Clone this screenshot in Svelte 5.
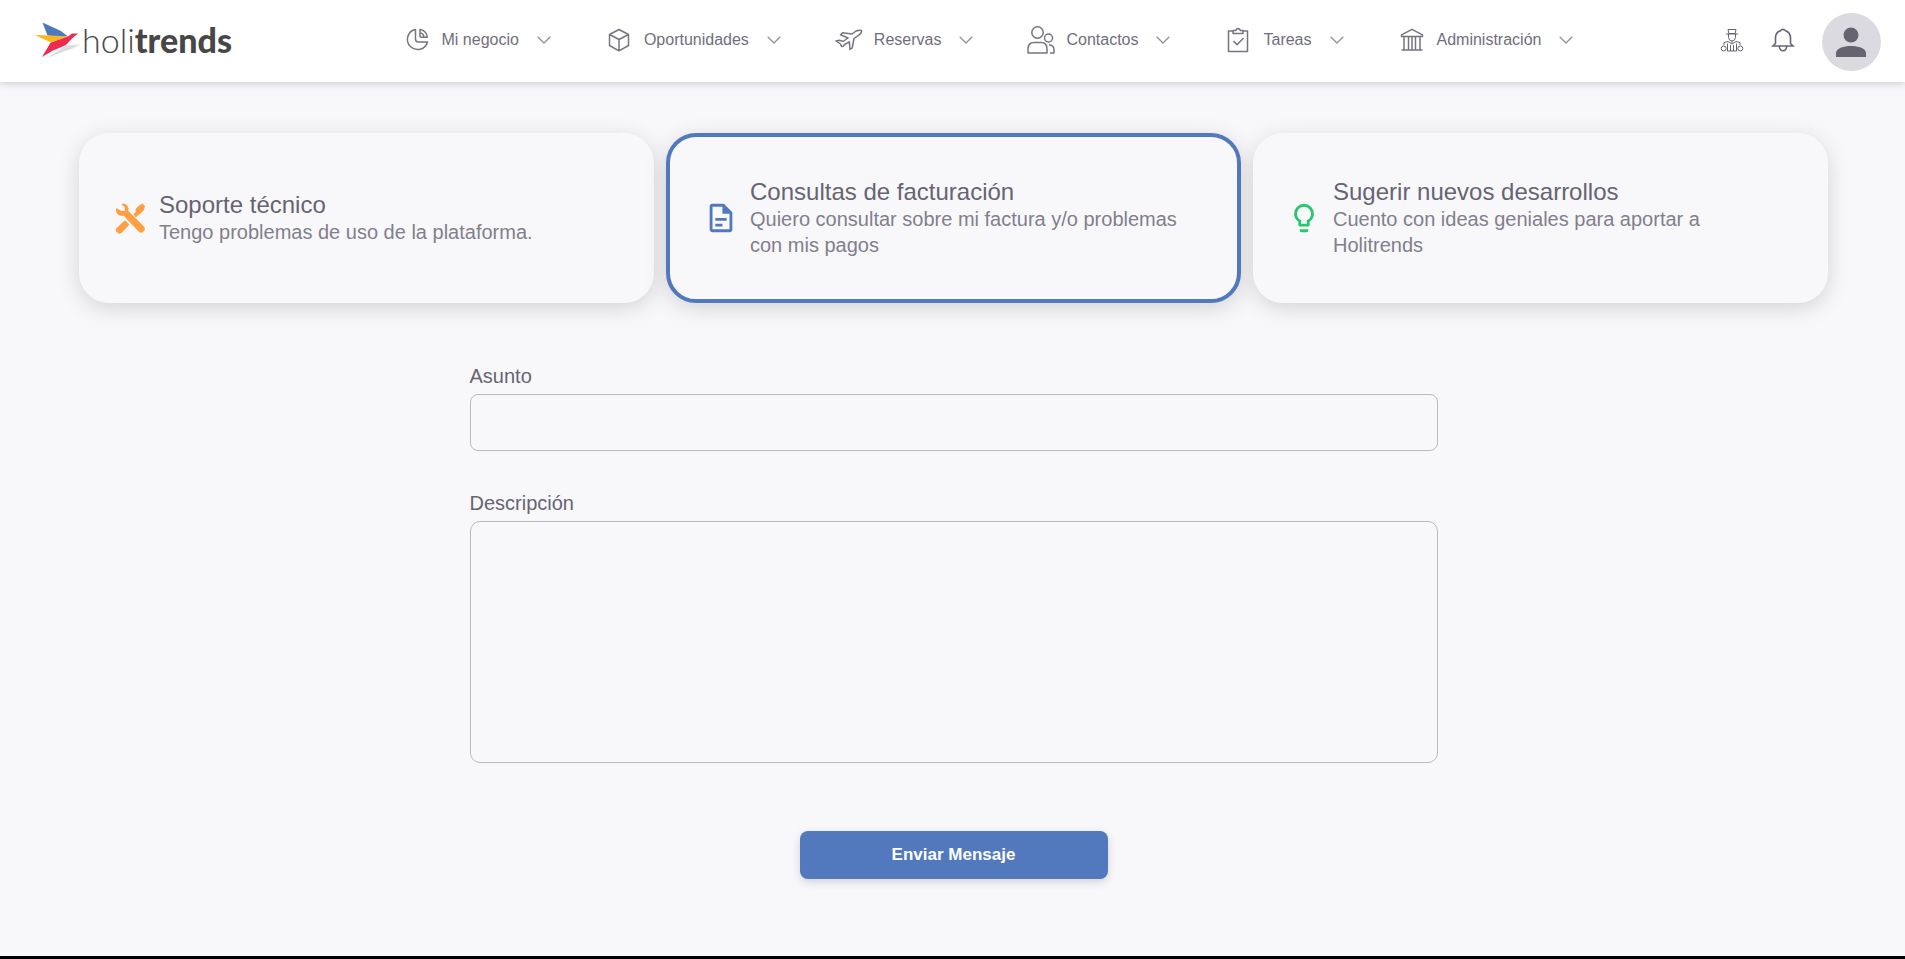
<script>
	const menu = [
		{ id: 'negocio', label: 'Mi negocio' },
		{ id: 'oportunidades', label: 'Oportunidades' },
		{ id: 'reservas', label: 'Reservas' },
		{ id: 'contactos', label: 'Contactos' },
		{ id: 'tareas', label: 'Tareas' },
		{ id: 'administracion', label: 'Administración' }
	];

	const motivos = [
		{
			id: 'soporte',
			titulo: 'Soporte técnico',
			detalle: 'Tengo problemas de uso de la plataforma.'
		},
		{
			id: 'facturacion',
			titulo: 'Consultas de facturación',
			detalle: 'Quiero consultar sobre mi factura y/o problemas con mis pagos'
		},
		{
			id: 'desarrollos',
			titulo: 'Sugerir nuevos desarrollos',
			detalle: 'Cuento con ideas geniales para aportar a Holitrends'
		}
	];

	let motivo = $state('facturacion');
	let asunto = $state('');
	let descripcion = $state('');

	function enviar(event) {
		event.preventDefault();
		asunto = '';
		descripcion = '';
	}
</script>

<div class="page">
	<header class="topbar">
		<a class="logo" href="#inicio">
			<svg class="bird" viewBox="0 0 46 38" aria-hidden="true">
				<path d="M12 37.5 L32 24.5 L46 23.5 L39 27.5 L27 31.5 Z" fill="#dcdde0" />
				<path d="M8.5 1.5 L27 10 L34 15.5 L24 16 L13.5 14.5 Z" fill="#4f79bd" />
				<path d="M1 14 L17 14.5 L34 15.5 L17 21.5 Z" fill="#fbb81b" />
				<path d="M34 15.5 L38 12.5 H44 L38.5 17 L32 24 L18 30 L8 36 L16.5 21.8 Z" fill="#ee2a52" />
			</svg>
			<span class="brand">holi<b>trends</b></span>
		</a>

		<nav class="menu">
			{#each menu as item (item.id)}
				<button type="button" class="menu-item">
					<svg class="menu-icon" viewBox="0 0 28 28" aria-hidden="true">
						{#if item.id === 'negocio'}
							<path d="M12 3.5 A10.2 10.2 0 1 0 24.5 16 H15.5 Q12.5 16 12.5 13 V3.5 Z" />
							<path d="M17 3.5 Q23.5 4.5 24.3 11.2 H18 Q17 11.2 17 10.2 Z M17 7 Q20.5 7.5 21 11" />
						{:else if item.id === 'oportunidades'}
							<path d="M14 3.5 L23.5 8.5 V19.5 L14 24.8 L4.5 19.5 V8.5 Z M4.5 8.5 L14 13.5 L23.5 8.5 M14 13.5 V24.8" />
						{:else if item.id === 'reservas'}
							<path d="M1 15 L4.5 14.3 L8 15.5 L13 12 L5.5 8.8 L7.5 6.8 L17 8 L21 5 Q25.5 3.5 26.7 4.8 Q26.8 7 23.5 9.3 L19 12.5 L17.2 22 L15 23.5 L14.4 15.8 L9.5 18.5 L8.2 20.2 L6.5 20.4 L5.5 18 Z" />
						{:else if item.id === 'contactos'}
							<circle cx="10.5" cy="6.5" r="5.7" />
							<path d="M1 27 V23 Q1 16.5 7 16.5 H14 Q20 16.5 20 23 V27 Z" />
							<circle cx="21.5" cy="12" r="4" />
							<path d="M22 18.7 Q27 19 27 24 V27 H23" />
						{:else if item.id === 'tareas'}
							<path d="M9 5 H4.5 V25.5 H23.5 V5 H19 M9 7.5 V4.5 H11.5 Q14 0.5 16.5 4.5 H19 V7.5 Z M9.5 15 L13 18.7 L19.5 12" />
						{:else}
							<path d="M3.5 10.5 V8.8 L14 3.3 L24.5 8.8 V10.5 Z M3.5 24 H24.5 M6 11 V24 M10.5 11 V24 M14 11 V24 M17.5 11 V24 M22 11 V24" />
						{/if}
					</svg>
					<span>{item.label}</span>
					<svg class="chevron" viewBox="0 0 14 8" aria-hidden="true">
						<path d="M0.7 0.7 L7 7 L13.3 0.7" />
					</svg>
				</button>
			{/each}
		</nav>

		<div class="actions">
			<button type="button" class="action" aria-label="Agente">
				<svg viewBox="0 0 24 24" class="agent" aria-hidden="true">
					<path d="M8 1.5 H16 L15.2 5.5 H8.8 Z M6 6 H18 M8.5 6 V9.5 Q9 13 12 13 Q15 13 15.5 9.5 V6 M12 13 V15" />
					<path d="M4 14.5 L8 13.5 L12 16 L16 13.5 L20 14.5 V17 M4 14.5 V17 M7.5 15.5 V23 H16.5 V15.5 M10.5 17 V23 M13.5 17 V23" />
					<circle cx="3.7" cy="20.5" r="2.5" />
					<circle cx="20.3" cy="20.5" r="2.5" />
				</svg>
			</button>
			<button type="button" class="action" aria-label="Notificaciones">
				<svg viewBox="0 0 24 24" class="bell" aria-hidden="true">
					<path d="M2 18 H22 L19.5 15.5 V9.5 Q19.3 4.2 14.5 2.7 Q12 0 9.5 2.7 Q4.7 4.2 4.5 9.5 V15.5 Z M8.3 18 Q8.5 22.7 12 22.7 Q15.5 22.7 15.7 18" />
				</svg>
			</button>
			<button type="button" class="avatar" aria-label="Mi cuenta">
				<svg viewBox="0 0 30 30" aria-hidden="true">
					<circle cx="15" cy="8" r="7.5" />
					<path d="M0 30 V26 C0 16.5 30 16.5 30 26 V30 Z" />
				</svg>
			</button>
		</div>
	</header>

	<main>
		<div class="cards">
			{#each motivos as m (m.id)}
				<button
					type="button"
					class="card"
					class:card--active={motivo === m.id}
					aria-pressed={motivo === m.id}
					onclick={() => (motivo = m.id)}
				>
					{#if m.id === 'soporte'}
						<svg class="card-icon card-icon--orange" viewBox="0 0 34 34" aria-hidden="true">
							<path d="M8.3 3 L12 6.8 L11.6 9.9 L8.5 10.1 L3.6 7 Q2.4 9 3.4 11.4 Q5.6 15.4 10.6 14.7 L26 31 Q28.2 32.6 30 31 L31.4 29.4 Q32.6 27.5 31 25.6 L15.4 9.9 Q16 5.8 13.2 3.4 Q10.8 1.9 8.3 3 Z" />
							<path d="M22.9 16.4 L20.3 13.5 L22.6 11.1 V8 L26 4.6 L29.5 2.4 L32 5 L30.8 9.2 L27.4 12.6 L25 14.2 Z" />
							<path d="M12 19.2 L16.4 23.8 L8.4 32 Q6.3 33.4 4.6 31.8 L3.4 30.6 Q2 28.7 3.5 27 Z" />
						</svg>
					{:else if m.id === 'facturacion'}
						<svg class="card-icon card-icon--blue" viewBox="0 0 24 24" aria-hidden="true">
							<path d="M6 2 A2 2 0 0 0 4 4 V20 A2 2 0 0 0 6 22 H18 A2 2 0 0 0 20 20 V8 L14 2 H6 M6 4 H13 V9 H18 V20 H6 V4 M8 12 V14 H16 V12 H8 M8 16 V18 H13 V16 H8 Z" />
						</svg>
					{:else}
						<svg class="card-icon card-icon--green" viewBox="0 0 24 24" aria-hidden="true">
							<path d="M12 2 A7 7 0 0 1 19 9 C19 11.4 17.8 13.5 16 14.7 V17 A1 1 0 0 1 15 18 H9 A1 1 0 0 1 8 17 V14.7 C6.2 13.5 5 11.4 5 9 A7 7 0 0 1 12 2 M9 20 H15 V21 A1 1 0 0 1 14 22 H10 A1 1 0 0 1 9 21 V20 M12 4 A5 5 0 0 0 7 9 C7 11 8.2 12.8 10 13.6 V16 H14 V13.6 C15.8 12.8 17 11 17 9 A5 5 0 0 0 12 4 Z" />
						</svg>
					{/if}
					<span class="card-text">
						<span class="card-title">{m.titulo}</span>
						<span class="card-detail">{m.detalle}</span>
					</span>
				</button>
			{/each}
		</div>

		<form onsubmit={enviar}>
			<label for="asunto">Asunto</label>
			<input id="asunto" type="text" bind:value={asunto} />
			<label for="descripcion">Descripción</label>
			<textarea id="descripcion" rows="9" bind:value={descripcion}></textarea>
			<button type="submit" class="submit">Enviar Mensaje</button>
		</form>
	</main>
</div>

<style>
	:global(body) {
		background: #f8f8fb;
	}

	.page {
		--blue: #5279bd;
		--text: #676472;
		--muted: #827f8c;
		display: flex;
		flex-direction: column;
		box-sizing: border-box;
		min-height: 100vh;
		border-bottom: 3px solid #000;
		font-family: 'Liberation Sans', Arial, sans-serif;
		color: var(--text);
	}

	button {
		font: inherit;
		color: inherit;
		background: none;
		border: none;
		padding: 0;
		cursor: pointer;
	}

	svg {
		display: block;
		flex: none;
	}

	.topbar {
		display: flex;
		align-items: center;
		justify-content: space-between;
		box-sizing: border-box;
		min-height: 82px;
		padding: 0 24px 2px 34px;
		background: #fff;
		box-shadow: 0 1px 8px rgba(70, 60, 90, 0.28);
	}

	.logo {
		display: flex;
		align-items: center;
		gap: 2px;
		color: #474747;
		text-decoration: none;
	}

	.bird {
		width: 46px;
		height: 38px;
	}

	.brand {
		font-family: Lato, 'Open Sans', sans-serif;
		font-size: 34px;
		line-height: 40px;
		font-weight: 300;
	}

	.brand b {
		font-weight: 900;
	}

	.menu {
		display: flex;
		gap: 54px;
		margin-left: 24px;
	}

	.menu-item {
		display: flex;
		align-items: center;
		font-size: 16px;
		line-height: 20px;
		color: #716e7c;
	}

	.menu-icon {
		width: 28px;
		height: 28px;
		margin-right: 11px;
		fill: none;
		stroke: #777482;
		stroke-width: 1.5;
		stroke-linejoin: round;
	}

	.chevron {
		width: 14px;
		height: 8px;
		margin-left: 18px;
		fill: none;
		stroke: #95929e;
		stroke-width: 1.3;
	}

	.actions {
		display: flex;
		align-items: center;
		gap: 27px;
	}

	.action svg {
		width: 24px;
		height: 24px;
		fill: none;
		stroke: #676472;
	}

	.agent {
		stroke-width: 1;
	}

	.bell {
		stroke-width: 1.6;
	}

	.avatar {
		display: grid;
		place-items: center;
		width: 59px;
		height: 58px;
		margin-top: 4px;
		border-radius: 50%;
		background: #dbdae0;
	}

	.avatar svg {
		width: 30px;
		height: 30px;
		fill: var(--text);
	}

	main {
		padding: 51px 77px 40px 79px;
	}

	.cards {
		display: grid;
		grid-template-columns: repeat(3, 1fr);
		gap: 12px;
	}

	.card {
		display: flex;
		align-items: center;
		gap: 12px;
		min-height: 170px;
		padding: 24px 40px 24px 34px;
		border-radius: 30px;
		background: #f8f8fb;
		box-shadow: 0 5px 22px rgba(0, 0, 0, 0.15);
		text-align: left;
	}

	.card--active {
		border: 4px solid var(--blue);
	}

	.card-icon {
		width: 34px;
		height: 34px;
	}

	.card-icon--orange {
		fill: #ff9f43;
	}

	.card-icon--blue {
		fill: var(--blue);
	}

	.card-icon--green {
		fill: #28c76f;
	}

	.card-text {
		display: flex;
		flex-direction: column;
	}

	.card-title {
		font-size: 24px;
		line-height: 28px;
	}

	.card-detail {
		font-size: 20px;
		line-height: 26px;
		color: var(--muted);
	}

	form {
		display: flex;
		flex-direction: column;
		max-width: 968px;
		margin: 59px auto 0;
	}

	label {
		margin-bottom: 4px;
		font-size: 20px;
		line-height: 28px;
	}

	input,
	textarea {
		box-sizing: border-box;
		margin: 0 0 38px;
		padding: 12px 16px;
		border: 1px solid #b9b9be;
		border-radius: 8px;
		background: transparent;
		font: inherit;
		font-size: 20px;
		line-height: 24px;
		color: var(--text);
	}

	input {
		height: 57px;
	}

	textarea {
		margin-bottom: 68px;
		border-radius: 10px;
		resize: none;
	}

	.submit {
		align-self: center;
		width: 308px;
		max-width: 100%;
		min-height: 48px;
		border-radius: 8px;
		background: var(--blue);
		box-shadow: 0 3px 8px rgba(70, 50, 80, 0.2);
		color: #fff;
		font-size: 17px;
		line-height: 24px;
		font-weight: 700;
	}
</style>
